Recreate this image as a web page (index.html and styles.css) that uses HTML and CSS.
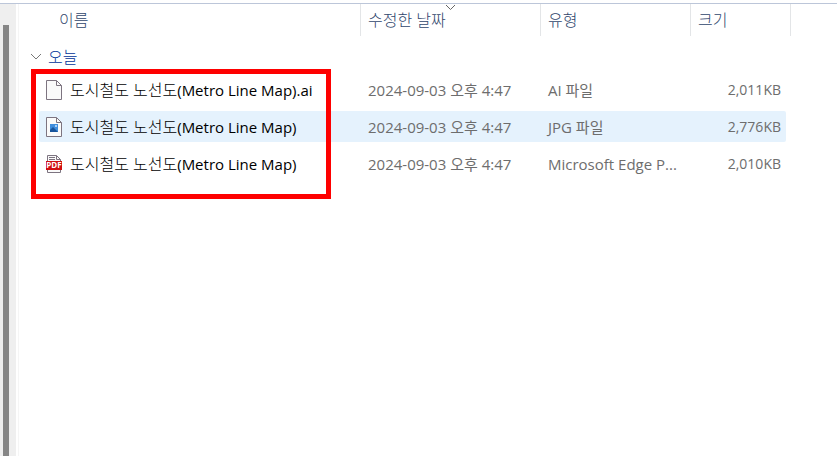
FILE: index.html
```html
<!DOCTYPE html>
<html lang="ko">
<head>
<meta charset="utf-8">
<title>파일 목록</title>
<link rel="stylesheet" href="styles.css">
</head>
<body>
<div class="explorer">
  <div class="scroll-track"><div class="scroll-thumb"></div></div>
  <main class="pane">
    <table class="files">
      <colgroup>
        <col>
        <col class="col-date">
        <col class="col-type">
        <col class="col-size">
      </colgroup>
      <thead>
        <tr>
          <th class="name" scope="col"><button type="button">이름</button></th>
          <th scope="col"><button type="button">수정한 날짜</button>
            <svg class="sort" width="11" height="7" viewBox="0 0 11 7"><path d="M1 1l4.500 4.500L10 1"/></svg>
          </th>
          <th scope="col"><button type="button">유형</button></th>
          <th scope="col"><button type="button">크기</button></th>
        </tr>
      </thead>
      <tbody>
        <tr class="group">
          <th colspan="4" scope="rowgroup"><button type="button"><svg width="12" height="8" viewBox="0 0 12 8"><path d="M1 1l5 5 5-5"/></svg>오늘</button></th>
        </tr>
        <tr>
          <td class="name"><div class="file">
            <svg width="16" height="20" viewBox="0 0 16 20"><path class="sheet" d="M.5.5h10l5 5v14H.5z"/><path class="fold" d="M10.500.5v5h5"/></svg>
            <span>도시철도 노선도<span class="latin">(Metro Line Map).ai</span></span></div></td>
          <td>2024-09-03 오후 4:47</td>
          <td>AI 파일</td>
          <td class="size">2,011KB</td>
        </tr>
        <tr class="hover">
          <td class="name"><div class="file">
            <svg width="16" height="20" viewBox="0 0 16 20"><path class="sheet" d="M.5.5h10l5 5v14H.5z"/><path class="fold" d="M10.500.5v5h5"/><path fill="#3e8ddd" d="M4 7h8v8H4z"/><path fill="#17549b" d="M4 13l3-3 5 5H4z"/><circle cx="10" cy="9" r="1" fill="#cfe6fb"/></svg>
            <span>도시철도 노선도<span class="latin">(Metro Line Map)</span></span></div></td>
          <td>2024-09-03 오후 4:47</td>
          <td>JPG 파일</td>
          <td class="size">2,776KB</td>
        </tr>
        <tr>
          <td class="name"><div class="file">
            <svg width="16" height="20" viewBox="0 0 16 20"><path class="sheet" d="M1.500 1.500h9l4 4v13h-13z"/><path class="fold" d="M10.500 1.500v4h4M3 3.500h6M3 5.500h6"/><path fill="#d10d10" d="M0 7h16v9H0z"/><text class="pdf" x="8" y="14">PDF</text></svg>
            <span>도시철도 노선도<span class="latin">(Metro Line Map)</span></span></div></td>
          <td>2024-09-03 오후 4:47</td>
          <td>Microsoft Edge P...</td>
          <td class="size">2,010KB</td>
        </tr>
      </tbody>
    </table>
    <div class="marker"></div>
  </main>
</div>
</body>
</html>
```
FILE: styles.css
```css
* { box-sizing: border-box; }

body {
  margin: 0;
  background: #fff;
  color: #6d6d6d;
  font: 15px/20px "Open Sans", "Noto Sans CJK KR", sans-serif;
}

.explorer {
  display: flex;
  min-height: 100vh;
  padding-top: 3px;
}

.scroll-track {
  width: 16px;
  padding: 21px 7px 0 3px;
  display: flex;
  background: #efefef;
  border-top: 1px solid #bcc6d9;
}

.scroll-thumb {
  flex: 1;
  background: #868686;
}

.pane {
  position: relative;
  flex: 1;
  min-width: 0;
  padding-right: 51px;
  padding-left: 23px;
  border-top: 1px solid #bcc6d9;
  background: linear-gradient(#f5f5f5, #f5f5f5) 2px 0 / 1px 100% no-repeat;
}

.files {
  width: 100%;
  margin-top: -6px;
  table-layout: fixed;
  border-collapse: separate;
  border-spacing: 0 6px;
}

.col-date { width: 180px; }
.col-type { width: 150px; }
.col-size { width: 96px; }

th, td {
  padding: 0 0 0 7px;
  text-align: left;
  font-weight: 400;
  white-space: nowrap;
}

th {
  font-size: 16px;
  font-weight: 300;
}

button {
  display: block;
  padding: 0;
  border: 0;
  background: none;
  color: inherit;
  font: inherit;
}

thead th {
  position: relative;
  height: 32px;
  color: #30466c;
  border-left: 1px solid #e3e5e7;
}

thead .name {
  padding-left: 20px;
  border-left: 0;
}

thead th:last-child::after {
  content: "";
  position: absolute;
  top: 0;
  right: -5px;
  height: 32px;
  border-right: 1px solid #e3e5e7;
}

.sort {
  position: absolute;
  top: 0;
  left: 50%;
  margin-left: -6px;
  fill: none;
  stroke: #666;
}

.group th {
  height: 26px;
  padding: 4px 0 0;
  color: #003399;
}

.group button {
  display: flex;
  align-items: center;
  gap: 6px;
  margin-left: -9px;
}

.group svg {
  fill: none;
  stroke: #777;
}

tbody td {
  height: 31px;
  padding-left: 8px;
}

tbody .name {
  padding-left: 7px;
  color: #000;
  font-size: 16px;
  font-weight: 300;
}

.latin {
  font-size: 15px;
  font-weight: 400;
}

.file {
  display: flex;
  align-items: center;
  gap: 8px;
}

.file svg {
  flex: none;
}

.sheet {
  fill: #fafafa;
  stroke: #7d7480;
}

.fold {
  fill: none;
  stroke: #7d7480;
}

.pdf {
  fill: #fff;
  font: bold 8px "Open Sans", sans-serif;
  text-anchor: middle;
}

.size {
  padding-right: 5px;
  font-size: 14px;
  text-align: right;
}

.hover td { background: #e5f2fd; }
.hover td:first-child { border-radius: 2px 0 0 2px; }
.hover td:last-child { border-radius: 0 2px 2px 0; }

.marker {
  position: absolute;
  top: 65px;
  left: 15px;
  width: 300px;
  height: 130px;
  border: 5px solid #fe0000;
  pointer-events: none;
}
```
